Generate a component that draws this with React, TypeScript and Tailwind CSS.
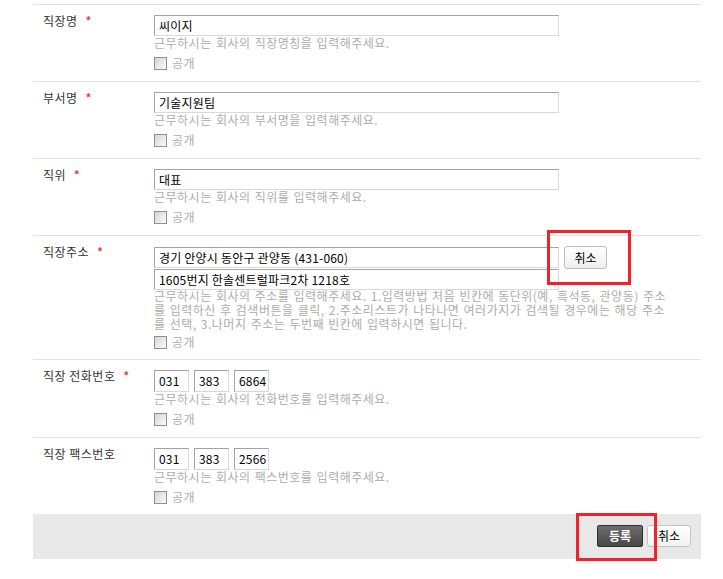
import type { ReactNode } from 'react'

const font = { fontFamily: '"Noto Sans CJK KR", "Liberation Sans", sans-serif' }

function Star() {
  return <span className="ml-[8px] text-[11px] font-bold leading-[14px] text-[#f2362a]">*</span>
}

function TextBox({ value, className }: { value: string; className: string }) {
  return (
    <div
      className={`flex items-center border border-t-[#a3a3a3] border-l-[#a3a3a3] border-r-[#d8d8d8] border-b-[#d8d8d8] bg-white pl-[4px] text-[12px] tracking-[0.2px] text-black ${className}`}
    >
      {value}
    </div>
  )
}

function Help({ children }: { children: ReactNode }) {
  return <div className="text-[12px] leading-[14px] tracking-[0.5px] text-[#acacac] [word-spacing:1px]">{children}</div>
}

function Public({ className }: { className: string }) {
  return (
    <div className={`flex items-center gap-[5px] ${className}`}>
      <span className="h-[13px] w-[13px] border border-[#8f8f8f] bg-gradient-to-br from-[#d6d6d6] to-[#fafafa]" />
      <span className="text-[12px] leading-[14px] tracking-[0.5px] text-[#acacac]">공개</span>
    </div>
  )
}

function Row({ label, required, className, children }: { label: string; required?: boolean; className: string; children: ReactNode }) {
  return (
    <div className={`flex border-t border-[#e2e2e2] ${className}`}>
      <div className="flex w-[121px] items-start pl-[10px] pt-[8px]">
        <span className="text-[12px] leading-[16px] tracking-[0.5px] text-[#333]">{label}</span>
        {required && <Star />}
      </div>
      <div className="flex-1 pt-[10px]">{children}</div>
    </div>
  )
}

function Phone({ parts }: { parts: string[] }) {
  return (
    <div className="flex gap-[5px]">
      {parts.map((p) => (
        <TextBox key={p} value={p} className="h-[22px] w-[35px]" />
      ))}
    </div>
  )
}

export default function App() {
  return (
    <div className="relative h-[579px] w-[723px] bg-white" style={font}>
      <div className="ml-[33px] w-[668px] pt-[4px]">
        <Row label="직장명" required className="h-[77px]">
          <TextBox value="씨이지" className="h-[21px] w-[405px]" />
          <Help>근무하시는 회사의 직장명칭을 입력해주세요.</Help>
          <Public className="mt-[6px]" />
        </Row>
        <Row label="부서명" required className="h-[77px]">
          <TextBox value="기술지원팀" className="h-[21px] w-[405px]" />
          <Help>근무하시는 회사의 부서명을 입력해주세요.</Help>
          <Public className="mt-[6px]" />
        </Row>
        <Row label="직위" required className="h-[77px]">
          <TextBox value="대표" className="h-[21px] w-[405px]" />
          <Help>근무하시는 회사의 직위를 입력해주세요.</Help>
          <Public className="mt-[6px]" />
        </Row>
        <Row label="직장주소" required className="h-[124px]">
          <div className="flex items-start gap-[5px]">
            <div className="mt-[1px] flex flex-col gap-[1px]">
              <TextBox value="경기 안양시 동안구 관양동 (431-060)" className="h-[21px] w-[405px]" />
              <TextBox value="1605번지 한솔센트럴파크2차 1218호" className="h-[21px] w-[405px]" />
            </div>
            <button className="h-[23px] w-[43px] rounded-[3px] border border-[#bcbcbc] bg-gradient-to-b from-white to-[#eeeeee] text-[12px] text-black">
              취소
            </button>
          </div>
          <div className="-mt-[1px] whitespace-nowrap text-[12px] leading-[14px] tracking-[0.5px] text-[#acacac] [word-spacing:1px]">
            <div>근무하시는 회사의 주소를 입력해주세요. 1.입력방법 처음 빈칸에 동단위(예, 흑석동, 관양동) 주소</div>
            <div>를 입력하신 후 검색버튼을 클릭, 2.주소리스트가 나타나면 여러가지가 검색될 경우에는 해당 주소</div>
            <div>를 선택, 3.나머지 주소는 두번째 빈칸에 입력하시면 됩니다.</div>
          </div>
          <Public className="mt-[4px]" />
        </Row>
        <Row label="직장 전화번호" required className="h-[78px]">
          <Phone parts={['031', '383', '6864']} />
          <Help>근무하시는 회사의 전화번호를 입력해주세요.</Help>
          <Public className="mt-[6px]" />
        </Row>
        <Row label="직장 팩스번호" className="h-[77px]">
          <Phone parts={['031', '383', '2566']} />
          <Help>근무하시는 회사의 팩스번호를 입력해주세요.</Help>
          <Public className="mt-[6px]" />
        </Row>
        <div className="flex h-[45px] justify-end gap-[4px] bg-[#e8e8e8] pr-[10px] pt-[11px]">
          <button className="h-[22px] w-[46px] rounded-[2px] border border-[#2e2e2e] bg-gradient-to-b from-[#6e6e6e] to-[#474747] text-[12px] font-bold text-white">
            등록
          </button>
          <button className="h-[22px] w-[44px] rounded-[3px] border border-[#c4c4c4] bg-gradient-to-b from-white to-[#f2f2f2] text-[12px] text-black">
            취소
          </button>
        </div>
      </div>

      <div className="absolute left-[547px] top-[230px] h-[55px] w-[84px] border-[3px] border-[#f0222a]" />
      <div className="absolute left-[576px] top-[513px] h-[48px] w-[81px] border-[3px] border-[#f0222a]" />
    </div>
  )
}
